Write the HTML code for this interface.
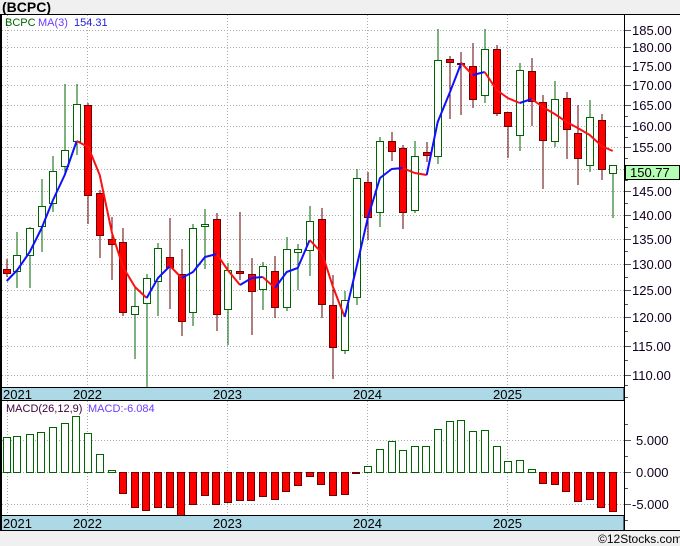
<!DOCTYPE html>
<html><head><meta charset="utf-8"><style>
html,body{margin:0;padding:0;background:#f0f0f0;}
svg{display:block;font-family:"Liberation Sans",sans-serif;}
</style></head><body>
<svg width="680" height="546" viewBox="0 0 680 546" xmlns="http://www.w3.org/2000/svg">
<rect x="0" y="0" width="680" height="546" fill="#f0f0f0"/>
<text x="2" y="12" font-size="14" font-weight="bold" fill="#000">(BCPC)</text>
<rect x="0" y="14" width="680" height="517" fill="#fff"/>
<g stroke="#aaa" stroke-dasharray="1,2" stroke-width="1">
<line x1="2" x2="624" y1="30.5" y2="30.5"/><line x1="2" x2="624" y1="47.5" y2="47.5"/><line x1="2" x2="624" y1="66.5" y2="66.5"/><line x1="2" x2="624" y1="85.5" y2="85.5"/><line x1="2" x2="624" y1="105.5" y2="105.5"/><line x1="2" x2="624" y1="126.5" y2="126.5"/><line x1="2" x2="624" y1="147.5" y2="147.5"/><line x1="2" x2="624" y1="169.5" y2="169.5"/><line x1="2" x2="624" y1="191.5" y2="191.5"/><line x1="2" x2="624" y1="215.5" y2="215.5"/><line x1="2" x2="624" y1="239.5" y2="239.5"/><line x1="2" x2="624" y1="264.5" y2="264.5"/><line x1="2" x2="624" y1="290.5" y2="290.5"/><line x1="2" x2="624" y1="317.5" y2="317.5"/><line x1="2" x2="624" y1="346.5" y2="346.5"/><line x1="2" x2="624" y1="375.5" y2="375.5"/>
<line x1="7.5" x2="7.5" y1="15" y2="387"/><line x1="87.5" x2="87.5" y1="15" y2="387"/><line x1="227.5" x2="227.5" y1="15" y2="387"/><line x1="367.5" x2="367.5" y1="15" y2="387"/><line x1="507.5" x2="507.5" y1="15" y2="387"/>
<line x1="2" x2="624" y1="440.5" y2="440.5"/><line x1="2" x2="624" y1="472.5" y2="472.5"/><line x1="2" x2="624" y1="504.5" y2="504.5"/>
<line x1="7.5" x2="7.5" y1="401" y2="515"/><line x1="87.5" x2="87.5" y1="401" y2="515"/><line x1="227.5" x2="227.5" y1="401" y2="515"/><line x1="367.5" x2="367.5" y1="401" y2="515"/><line x1="507.5" x2="507.5" y1="401" y2="515"/>
</g>
<text x="5" y="26" font-size="11" fill="#006400">BCPC</text>
<text x="38" y="26" font-size="11" fill="#6a3cff">MA(3)</text>
<text x="74" y="26" font-size="11" fill="#2020e0">154.31</text>
<!-- candles -->
<g id="c" stroke-width="1" shape-rendering="crispEdges">
<line x1="7" x2="7" y1="259" y2="277" stroke="#600000"/><rect x="3.5" y="269.5" width="7" height="4" fill="#f00" stroke="#700000"/>
<line x1="17" x2="17" y1="232" y2="288" stroke="#006400"/><rect x="13.5" y="255.5" width="7" height="16" fill="#fff" stroke="#006400"/>
<line x1="30" x2="30" y1="227" y2="288" stroke="#006400"/><rect x="26.5" y="228.5" width="7" height="27" fill="#fff" stroke="#006400"/>
<line x1="42" x2="42" y1="179" y2="252" stroke="#006400"/><rect x="38.5" y="206.5" width="7" height="20" fill="#fff" stroke="#006400"/>
<line x1="53" x2="53" y1="156" y2="212" stroke="#006400"/><rect x="49.5" y="171.5" width="7" height="32" fill="#fff" stroke="#006400"/>
<line x1="65" x2="65" y1="84" y2="175" stroke="#006400"/><rect x="61.5" y="150.5" width="7" height="16" fill="#fff" stroke="#006400"/>
<line x1="77" x2="77" y1="84" y2="155" stroke="#006400"/><rect x="73.5" y="104.5" width="7" height="37" fill="#fff" stroke="#006400"/>
<line x1="88" x2="88" y1="103" y2="224" stroke="#600000"/><rect x="84.5" y="105.5" width="7" height="90" fill="#f00" stroke="#700000"/>
<line x1="100" x2="100" y1="190" y2="258" stroke="#600000"/><rect x="96.5" y="193.5" width="7" height="42" fill="#f00" stroke="#700000"/>
<line x1="112" x2="112" y1="217" y2="280" stroke="#600000"/><rect x="108.5" y="239.5" width="7" height="5" fill="#f00" stroke="#700000"/>
<line x1="123" x2="123" y1="228" y2="316" stroke="#600000"/><rect x="119.5" y="242.5" width="7" height="70" fill="#f00" stroke="#700000"/>
<line x1="135" x2="135" y1="287" y2="359" stroke="#006400"/><rect x="131.5" y="306.5" width="7" height="8" fill="#fff" stroke="#006400"/>
<line x1="147" x2="147" y1="274" y2="388" stroke="#006400"/><rect x="143.5" y="278.5" width="7" height="25" fill="#fff" stroke="#006400"/>
<line x1="158" x2="158" y1="243" y2="316" stroke="#006400"/><rect x="154.5" y="248.5" width="7" height="33" fill="#fff" stroke="#006400"/>
<line x1="170" x2="170" y1="218" y2="309" stroke="#600000"/><rect x="166.5" y="257.5" width="7" height="10" fill="#f00" stroke="#700000"/>
<line x1="182" x2="182" y1="249" y2="336" stroke="#600000"/><rect x="178.5" y="274.5" width="7" height="47" fill="#f00" stroke="#700000"/>
<line x1="193" x2="193" y1="224" y2="326" stroke="#006400"/><rect x="189.5" y="228.5" width="7" height="84" fill="#fff" stroke="#006400"/>
<line x1="205" x2="205" y1="209" y2="269" stroke="#006400"/><rect x="201.5" y="224.5" width="7" height="2" fill="#fff" stroke="#006400"/>
<line x1="217" x2="217" y1="213" y2="331" stroke="#600000"/><rect x="213.5" y="219.5" width="7" height="95" fill="#f00" stroke="#700000"/>
<line x1="228" x2="228" y1="263" y2="345" stroke="#006400"/><rect x="224.5" y="270.5" width="7" height="39" fill="#fff" stroke="#006400"/>
<line x1="240" x2="240" y1="212" y2="280" stroke="#600000"/><rect x="236.5" y="271.5" width="7" height="2" fill="#f00" stroke="#700000"/>
<line x1="252" x2="252" y1="258" y2="335" stroke="#600000"/><rect x="248.5" y="274.5" width="7" height="17" fill="#f00" stroke="#700000"/>
<line x1="263" x2="263" y1="262" y2="310" stroke="#006400"/><rect x="259.5" y="266.5" width="7" height="23" fill="#fff" stroke="#006400"/>
<line x1="275" x2="275" y1="256" y2="318" stroke="#600000"/><rect x="271.5" y="271.5" width="7" height="36" fill="#f00" stroke="#700000"/>
<line x1="287" x2="287" y1="237" y2="311" stroke="#006400"/><rect x="283.5" y="249.5" width="7" height="58" fill="#fff" stroke="#006400"/>
<line x1="298" x2="298" y1="244" y2="290" stroke="#006400"/><rect x="294.5" y="249.5" width="7" height="3" fill="#fff" stroke="#006400"/>
<line x1="310" x2="310" y1="206" y2="276" stroke="#006400"/><rect x="306.5" y="221.5" width="7" height="29" fill="#fff" stroke="#006400"/>
<line x1="322" x2="322" y1="208" y2="318" stroke="#600000"/><rect x="318.5" y="219.5" width="7" height="85" fill="#f00" stroke="#700000"/>
<line x1="333" x2="333" y1="275" y2="379" stroke="#600000"/><rect x="329.5" y="305.5" width="7" height="42" fill="#f00" stroke="#700000"/>
<line x1="345" x2="345" y1="291" y2="354" stroke="#006400"/><rect x="341.5" y="300.5" width="7" height="50" fill="#fff" stroke="#006400"/>
<line x1="357" x2="357" y1="169" y2="305" stroke="#006400"/><rect x="353.5" y="178.5" width="7" height="119" fill="#fff" stroke="#006400"/>
<line x1="368" x2="368" y1="172" y2="240" stroke="#600000"/><rect x="364.5" y="182.5" width="7" height="35" fill="#f00" stroke="#700000"/>
<line x1="380" x2="380" y1="137" y2="227" stroke="#006400"/><rect x="376.5" y="141.5" width="7" height="71" fill="#fff" stroke="#006400"/>
<line x1="392" x2="392" y1="132" y2="161" stroke="#600000"/><rect x="388.5" y="141.5" width="7" height="10" fill="#f00" stroke="#700000"/>
<line x1="403" x2="403" y1="145" y2="229" stroke="#600000"/><rect x="399.5" y="148.5" width="7" height="64" fill="#f00" stroke="#700000"/>
<line x1="415" x2="415" y1="141" y2="213" stroke="#006400"/><rect x="411.5" y="156.5" width="7" height="54" fill="#fff" stroke="#006400"/>
<line x1="427" x2="427" y1="142" y2="162" stroke="#600000"/><rect x="423.5" y="152.5" width="7" height="3" fill="#f00" stroke="#700000"/>
<line x1="438" x2="438" y1="29" y2="164" stroke="#006400"/><rect x="434.5" y="60.5" width="7" height="96" fill="#fff" stroke="#006400"/>
<line x1="450" x2="450" y1="56" y2="119" stroke="#600000"/><rect x="446.5" y="59.5" width="7" height="3" fill="#f00" stroke="#700000"/>
<line x1="461" x2="461" y1="52" y2="115" stroke="#600000"/><rect x="457.5" y="63.5" width="7" height="1" fill="#f00" stroke="#700000"/>
<line x1="473" x2="473" y1="43" y2="108" stroke="#600000"/><rect x="469.5" y="66.5" width="7" height="33" fill="#f00" stroke="#700000"/>
<line x1="485" x2="485" y1="29" y2="103" stroke="#006400"/><rect x="481.5" y="49.5" width="7" height="46" fill="#fff" stroke="#006400"/>
<line x1="497" x2="497" y1="45" y2="116" stroke="#600000"/><rect x="493.5" y="49.5" width="7" height="64" fill="#f00" stroke="#700000"/>
<line x1="508" x2="508" y1="112" y2="158" stroke="#600000"/><rect x="504.5" y="112.5" width="7" height="14" fill="#f00" stroke="#700000"/>
<line x1="520" x2="520" y1="63" y2="151" stroke="#006400"/><rect x="516.5" y="70.5" width="7" height="65" fill="#fff" stroke="#006400"/>
<line x1="532" x2="532" y1="58" y2="126" stroke="#600000"/><rect x="528.5" y="71.5" width="7" height="30" fill="#f00" stroke="#700000"/>
<line x1="543" x2="543" y1="95" y2="189" stroke="#600000"/><rect x="539.5" y="102.5" width="7" height="38" fill="#f00" stroke="#700000"/>
<line x1="555" x2="555" y1="81" y2="147" stroke="#006400"/><rect x="551.5" y="99.5" width="7" height="42" fill="#fff" stroke="#006400"/>
<line x1="567" x2="567" y1="92" y2="159" stroke="#600000"/><rect x="563.5" y="98.5" width="7" height="31" fill="#f00" stroke="#700000"/>
<line x1="578" x2="578" y1="105" y2="185" stroke="#600000"/><rect x="574.5" y="133.5" width="7" height="25" fill="#f00" stroke="#700000"/>
<line x1="590" x2="590" y1="100" y2="172" stroke="#006400"/><rect x="586.5" y="117.5" width="7" height="48" fill="#fff" stroke="#006400"/>
<line x1="602" x2="602" y1="114" y2="180" stroke="#600000"/><rect x="598.5" y="120.5" width="7" height="49" fill="#f00" stroke="#700000"/>
<line x1="613" x2="613" y1="165" y2="218" stroke="#006400"/><rect x="609.5" y="165.5" width="7" height="8" fill="#fff" stroke="#006400"/>
</g>
<!-- MA -->
<g fill="none" stroke-width="2" stroke-linejoin="round">
<polyline stroke="#1010ff" points="6.7,281 17.3,270 29.7,252 41.7,228 53,200 64.7,175 76.7,141"/>
<polyline stroke="#ff1010" points="76.7,141 88.3,147 99.7,175 112,233 123,267 135,287 146.7,298"/>
<polyline stroke="#1010ff" points="146.7,298 158,278 170,266"/>
<polyline stroke="#ff1010" points="170,266 181.7,278"/>
<polyline stroke="#1010ff" points="181.7,278 193,272 205,257 216.7,254"/>
<polyline stroke="#ff1010" points="216.7,254 227.7,270 240,285"/>
<polyline stroke="#1010ff" points="240,285 251.7,278 262.7,277"/>
<polyline stroke="#ff1010" points="262.7,277 275,288"/>
<polyline stroke="#1010ff" points="275,288 286.7,272 297.7,268 309.7,240"/>
<polyline stroke="#ff1010" points="309.7,240 322,253 333,287 344.7,317"/>
<polyline stroke="#1010ff" points="344.7,317 357,265 368,217 380,178 391.7,169 402.7,168"/>
<polyline stroke="#ff1010" points="402.7,168 414.7,173 426.7,175"/>
<polyline stroke="#1010ff" points="426.7,175 437.7,122 450,92 461.3,63"/>
<polyline stroke="#ff1010" points="461.3,63 472.7,75"/>
<polyline stroke="#1010ff" points="472.7,75 484.7,72"/>
<polyline stroke="#ff1010" points="484.7,72 496.7,90 507.7,98 519.7,103"/>
<polyline stroke="#1010ff" points="519.7,103 531.7,99"/>
<polyline stroke="#ff1010" points="531.7,99 542.7,107 554.7,114 566.7,122 577.7,128 589.7,135 601.7,146 612.7,151"/>
</g>
<!-- MACD bars -->
<g shape-rendering="crispEdges">
<g fill="#fff" stroke="#006400">
<rect x="3.5" y="437.5" width="7" height="35"/><rect x="13.5" y="436.5" width="7" height="36"/><rect x="26.5" y="434.5" width="7" height="38"/><rect x="37.5" y="432.5" width="7" height="40"/><rect x="49.5" y="427.5" width="7" height="45"/><rect x="61.5" y="423.5" width="7" height="49"/><rect x="72.5" y="416.5" width="7" height="56"/><rect x="84.5" y="433.5" width="7" height="39"/><rect x="96.5" y="454.5" width="7" height="18"/><rect x="108.5" y="470.5" width="7" height="2"/>
<rect x="364.5" y="466.5" width="7" height="6"/><rect x="376.5" y="449.5" width="7" height="23"/><rect x="388.5" y="441.5" width="7" height="31"/><rect x="399.5" y="450.5" width="7" height="22"/><rect x="411.5" y="446.5" width="7" height="26"/><rect x="422.5" y="446.5" width="7" height="26"/><rect x="434.5" y="429.5" width="7" height="43"/><rect x="446.5" y="421.5" width="7" height="51"/><rect x="457.5" y="420.5" width="7" height="52"/><rect x="469.5" y="431.5" width="7" height="41"/><rect x="481.5" y="430.5" width="7" height="42"/><rect x="493.5" y="446.5" width="7" height="26"/><rect x="504.5" y="461.5" width="7" height="11"/><rect x="516.5" y="460.5" width="7" height="12"/><rect x="528.5" y="469.5" width="7" height="3"/>
</g>
<g fill="#f00" stroke="#700000">
<rect x="119.5" y="472.5" width="7" height="21"/><rect x="131.5" y="472.5" width="7" height="35"/><rect x="142.5" y="472.5" width="7" height="38"/><rect x="154.5" y="472.5" width="7" height="35"/><rect x="166.5" y="472.5" width="7" height="35"/><rect x="177.5" y="472.5" width="7" height="43"/><rect x="189.5" y="472.5" width="7" height="32"/><rect x="201.5" y="472.5" width="7" height="23"/><rect x="212.5" y="472.5" width="7" height="32"/><rect x="224.5" y="472.5" width="7" height="30"/><rect x="236.5" y="472.5" width="7" height="28"/><rect x="247.5" y="472.5" width="7" height="28"/><rect x="259.5" y="472.5" width="7" height="24"/><rect x="271.5" y="472.5" width="7" height="27"/><rect x="282.5" y="472.5" width="7" height="19"/><rect x="294.5" y="472.5" width="7" height="13"/><rect x="306.5" y="472.5" width="7" height="4"/><rect x="317.5" y="472.5" width="7" height="12"/><rect x="329.5" y="472.5" width="7" height="23"/><rect x="341.5" y="472.5" width="7" height="22"/><rect x="352.5" y="472.5" width="7" height="1"/>
<rect x="539.5" y="472.5" width="7" height="11"/><rect x="551.5" y="472.5" width="7" height="12"/><rect x="562.5" y="472.5" width="7" height="19"/><rect x="574.5" y="472.5" width="7" height="29"/><rect x="586.5" y="472.5" width="7" height="27"/><rect x="597.5" y="472.5" width="7" height="35"/><rect x="609.5" y="472.5" width="7" height="39"/>
</g>
</g>
<text x="6" y="412" font-size="11" fill="#400040">MACD(26,12,9)</text>
<text x="88" y="412" font-size="11" fill="#6a3cff">MACD:-6.084</text>
<!-- date bands -->
<rect x="1" y="387.5" width="623" height="13" fill="#add8e6" stroke="#000"/>
<rect x="1" y="515.5" width="623" height="15" fill="#add8e6" stroke="#000"/>
<g font-size="13" fill="#000">
<text x="3" y="399">2021</text><text x="73" y="399">2022</text><text x="213" y="399">2023</text><text x="353" y="399">2024</text><text x="493" y="399">2025</text>
<text x="3" y="528">2021</text><text x="73" y="528">2022</text><text x="213" y="528">2023</text><text x="353" y="528">2024</text><text x="493" y="528">2025</text>
</g>
<!-- borders -->
<line x1="0" x2="680" y1="14.5" y2="14.5" stroke="#000"/>
<line x1="0" x2="680" y1="530.5" y2="530.5" stroke="#000"/>
<line x1="1" x2="1" y1="14" y2="531" stroke="#000" stroke-width="2"/>
<line x1="624.5" x2="624.5" y1="14" y2="531" stroke="#000"/>
<!-- axis ticks -->
<g stroke="#555">
<line x1="625" x2="631" y1="30.5" y2="30.5"/><line x1="625" x2="631" y1="47.5" y2="47.5"/><line x1="625" x2="631" y1="66.5" y2="66.5"/><line x1="625" x2="631" y1="85.5" y2="85.5"/><line x1="625" x2="631" y1="105.5" y2="105.5"/><line x1="625" x2="631" y1="126.5" y2="126.5"/><line x1="625" x2="631" y1="147.5" y2="147.5"/><line x1="625" x2="631" y1="169.5" y2="169.5"/><line x1="625" x2="631" y1="191.5" y2="191.5"/><line x1="625" x2="631" y1="215.5" y2="215.5"/><line x1="625" x2="631" y1="239.5" y2="239.5"/><line x1="625" x2="631" y1="264.5" y2="264.5"/><line x1="625" x2="631" y1="290.5" y2="290.5"/><line x1="625" x2="631" y1="317.5" y2="317.5"/><line x1="625" x2="631" y1="346.5" y2="346.5"/><line x1="625" x2="631" y1="375.5" y2="375.5"/>
<line x1="625" x2="628" y1="116.5" y2="116.5"/><line x1="625" x2="628" y1="137.5" y2="137.5"/><line x1="625" x2="628" y1="158.5" y2="158.5"/><line x1="625" x2="628" y1="180.5" y2="180.5"/><line x1="625" x2="628" y1="203.5" y2="203.5"/><line x1="625" x2="628" y1="227.5" y2="227.5"/><line x1="625" x2="628" y1="251.5" y2="251.5"/><line x1="625" x2="628" y1="277.5" y2="277.5"/><line x1="625" x2="628" y1="304.5" y2="304.5"/><line x1="625" x2="628" y1="331.5" y2="331.5"/><line x1="625" x2="628" y1="360.5" y2="360.5"/><line x1="625" x2="628" y1="385.5" y2="385.5"/><line x1="625" x2="628" y1="397.5" y2="397.5"/>
<line x1="625" x2="631" y1="440.5" y2="440.5"/><line x1="625" x2="631" y1="472.5" y2="472.5"/><line x1="625" x2="631" y1="504.5" y2="504.5"/>
<line x1="625" x2="628" y1="424.5" y2="424.5"/><line x1="625" x2="628" y1="456.5" y2="456.5"/><line x1="625" x2="628" y1="488.5" y2="488.5"/><line x1="625" x2="628" y1="520.5" y2="520.5"/>
</g>
<g font-size="13" fill="#100020">
<text x="632" y="35">185.00</text><text x="632" y="52">180.00</text><text x="632" y="71">175.00</text><text x="632" y="90">170.00</text><text x="632" y="110">165.00</text><text x="632" y="131">160.00</text><text x="632" y="152">155.00</text><text x="632" y="196">145.00</text><text x="632" y="220">140.00</text><text x="632" y="244">135.00</text><text x="632" y="269">130.00</text><text x="632" y="295">125.00</text><text x="632" y="322">120.00</text><text x="632" y="351">115.00</text><text x="632" y="380">110.00</text>
<text x="636" y="445">5.000</text><text x="636" y="477">0.000</text><text x="632" y="509">-5.000</text>
</g>
<rect x="625.5" y="165.5" width="54" height="14" fill="#b4ffb4" stroke="#000"/>
<text x="630" y="177" font-size="13" fill="#000">150.77</text>
<text x="598" y="543" font-size="12" fill="#000">©12Stocks.com</text>
</svg>
</body></html>
